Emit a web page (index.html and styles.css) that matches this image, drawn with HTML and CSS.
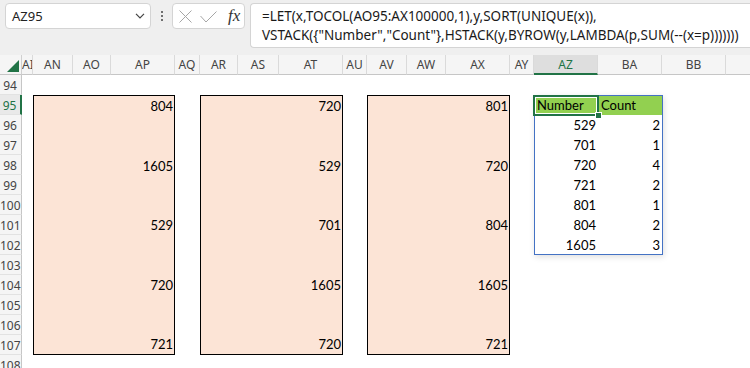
FILE: index.html
```html
<!DOCTYPE html>
<html>
<head>
<meta charset="utf-8">
<link rel="stylesheet" href="styles.css">
</head>
<body>
<div class="toolbar">
  <div class="namebox">
    <span>AZ95</span>
    <svg class="chev" width="10" height="6" viewBox="0 0 10 6"><polyline points="1,0.8 5,4.8 9,0.8" fill="none" stroke="#444" stroke-width="1.2"/></svg>
  </div>
  <div class="kebab">
    <span class="dot"></span><span class="dot"></span><span class="dot"></span>
  </div>
  <div class="fxbox">
    <svg class="ico-x" width="13" height="13" viewBox="0 0 13 13"><path d="M0.5 0.5 L12.5 12.5 M12.5 0.5 L0.5 12.5" stroke="#a6a6a6" stroke-width="1" fill="none"/></svg>
    <svg class="ico-ok" width="17" height="12" viewBox="0 0 17 12"><polyline points="0.5,5 6,11 16.5,0.5" fill="none" stroke="#a6a6a6" stroke-width="1"/></svg>
    <span class="fx">fx</span>
  </div>
  <div class="formula">=LET(x,TOCOL(AO95:AX100000,1),y,SORT(UNIQUE(x)),<br>VSTACK({"Number","Count"},HSTACK(y,BYROW(y,LAMBDA(p,SUM(--(x=p)))))))</div>
</div>

<div class="sheet">
  <div class="corner">
    <svg width="12" height="12" viewBox="0 0 12 12"><polygon points="12,0 12,12 0,12" fill="#217346"/></svg>
  </div>
  <div class="colheads">
    <div class="ch">AI</div>
    <div class="ch">AN</div>
    <div class="ch">AO</div>
    <div class="ch">AP</div>
    <div class="ch">AQ</div>
    <div class="ch">AR</div>
    <div class="ch">AS</div>
    <div class="ch">AT</div>
    <div class="ch">AU</div>
    <div class="ch">AV</div>
    <div class="ch">AW</div>
    <div class="ch">AX</div>
    <div class="ch">AY</div>
    <div class="ch sel">AZ</div>
    <div class="ch">BA</div>
    <div class="ch">BB</div>
    <div class="ch last"></div>
  </div>
  <div class="rowheads">
    <div class="rh">94</div>
    <div class="rh sel">95</div>
    <div class="rh">96</div>
    <div class="rh">97</div>
    <div class="rh">98</div>
    <div class="rh">99</div>
    <div class="rh">100</div>
    <div class="rh">101</div>
    <div class="rh">102</div>
    <div class="rh">103</div>
    <div class="rh">104</div>
    <div class="rh">105</div>
    <div class="rh">106</div>
    <div class="rh">107</div>
    <div class="rh">108</div>
  </div>
  <div class="cells">
    <div class="box b1">
      <div class="v">804</div>
      <div class="v">1605</div>
      <div class="v">529</div>
      <div class="v">720</div>
      <div class="v">721</div>
    </div>
    <div class="box b2">
      <div class="v">720</div>
      <div class="v">529</div>
      <div class="v">701</div>
      <div class="v">1605</div>
      <div class="v">720</div>
    </div>
    <div class="box b3">
      <div class="v">801</div>
      <div class="v">720</div>
      <div class="v">804</div>
      <div class="v">1605</div>
      <div class="v">721</div>
    </div>
    <div class="tbl">
      <div class="th">Number</div><div class="th th2">Count</div>
      <div class="td">529</div><div class="td td2">2</div>
      <div class="td">701</div><div class="td td2">1</div>
      <div class="td">720</div><div class="td td2">4</div>
      <div class="td">721</div><div class="td td2">2</div>
      <div class="td">801</div><div class="td td2">1</div>
      <div class="td">804</div><div class="td td2">2</div>
      <div class="td">1605</div><div class="td td2">3</div>
      <div class="selbox"><span class="handle"></span></div>
    </div>
  </div>
</div>
</body>
</html>
```

FILE: styles.css
```css
* { box-sizing: border-box; }
html, body { margin: 0; padding: 0; }
body {
  width: 750px;
  height: 368px;
  overflow: hidden;
  background: #fff;
  font-family: "Noto Sans", "Open Sans", sans-serif;
  --cols: 11px 40px 38px 64px 25px 38px 41px 64px 24px 40px 39px 64px 24px 64px 64px 64px 1fr;
}

/* ---------- toolbar ---------- */
.toolbar {
  height: 55px;
  background: #efefef;
  display: flex;
  align-items: flex-start;
  padding: 3px 0 0 5px;
}
.namebox {
  width: 146px;
  height: 26px;
  background: #fff;
  border: 1px solid #d4d4d4;
  border-radius: 4px;
  display: flex;
  align-items: center;
  justify-content: space-between;
  padding: 0 5px 0 6px;
  font-size: 13px;
  color: #222;
}
.kebab {
  width: 21px;
  height: 26px;
  display: flex;
  flex-direction: column;
  align-items: center;
  justify-content: center;
  gap: 2px;
}
.dot {
  width: 2px;
  height: 2px;
  background: #444;
  border-radius: 1px;
}
.fxbox {
  width: 73px;
  height: 26px;
  margin-right: 5px;
  background: #fff;
  border: 1px solid #d4d4d4;
  border-radius: 4px;
  display: flex;
  align-items: center;
  padding-left: 6px;
}
.ico-x { margin-right: 8px; }
.ico-ok { margin-right: 11px; margin-top: 1px; }
.fx {
  font-family: "Liberation Serif", "DejaVu Serif", serif;
  font-style: italic;
  font-size: 17px;
  color: #333;
  line-height: 1;
  margin-top: -2px;
}
.formula {
  flex: 1;
  height: 45px;
  background: #fff;
  border: 1px solid #d4d4d4;
  border-right: none;
  border-radius: 4px 0 0 4px;
  padding: 3px 0 0 11px;
  font-size: 13.5px;
  line-height: 19px;
  color: #1a1a1a;
  white-space: nowrap;
  overflow: hidden;
}

/* ---------- sheet ---------- */
.sheet {
  display: grid;
  grid-template-columns: 22px 1fr;
  grid-template-rows: 20px 1fr;
  height: 313px;
  overflow: hidden;
}
.corner {
  background: #f5f5f5;
  border-right: 1px solid #d0d0d0;
  border-bottom: 1px solid #c6c6c6;
  display: flex;
  justify-content: flex-end;
  align-items: flex-end;
  padding: 0 2px 2px 0;
}
.colheads {
  display: grid;
  grid-template-columns: var(--cols);
  background: #f5f5f5;
}
.ch {
  height: 20px;
  border-right: 1px solid #dadada;
  border-bottom: 1px solid #c6c6c6;
  text-align: center;
  font-size: 12px;
  line-height: 20px;
  color: #444;
  overflow: hidden;
  white-space: nowrap;
}
.ch.sel {
  background: #dedede;
  color: #217346;
  border-bottom: 2px solid #217346;
  line-height: 19px;
}
.ch.last { border-right: none; }

.rowheads {
  display: flex;
  flex-direction: column;
  background: #f5f5f5;
}
.rh {
  height: 20px;
  flex: none;
  border-right: 1px solid #c6c6c6;
  border-bottom: 1px solid #e2e2e2;
  text-align: center;
  padding: 1px 1px 0 0;
  font-size: 12px;
  line-height: 19px;
  color: #444;
  white-space: nowrap;
}
.rh.sel {
  color: #217346;
  background: #e9e9e9;
  border-right: 2px solid #217346;
}

.cells {
  display: grid;
  grid-template-columns: var(--cols);
  grid-template-rows: repeat(15, 20px);
  font-family: "Lato", "Open Sans", sans-serif;
  font-size: 13px;
  color: #000;
}
.box {
  background: #fce4d6;
  border: 1px solid #000;
  display: flex;
  flex-direction: column;
  justify-content: space-between;
  grid-row: 2 / 15;
}
.b1 { grid-column: 2 / 5; }
.b2 { grid-column: 6 / 9; }
.b3 { grid-column: 10 / 13; }
.v {
  height: 20px;
  line-height: 20px;
  text-align: right;
  padding-right: 1px;
}

.tbl {
  grid-column: 14 / 16;
  grid-row: 2 / 10;
  width: calc(100% + 1px);
  border: 1px solid #4472c4;
  display: grid;
  grid-template-columns: 63px 1fr;
  grid-template-rows: 19px repeat(6, 20px) 19px;
  position: relative;
  background: #fff;
  box-shadow: 1px 2px 6px rgba(0, 0, 0, 0.13);
}
.th {
  background: #92d050;
  padding-left: 2px;
  line-height: 19px;
}
.th2 { padding-left: 3px; }
.td {
  text-align: right;
  padding-right: 2px;
  line-height: 20px;
}
.td2 { padding-right: 2px; }
.selbox {
  position: absolute;
  left: -2px;
  top: -1px;
  width: 66px;
  height: 21px;
  border: 2px solid #217346;
  box-shadow: inset 0 0 0 1px #fff;
}
.handle {
  position: absolute;
  right: -5px;
  bottom: -5px;
  width: 7px;
  height: 7px;
  background: #217346;
  border: 1px solid #fff;
}
```
